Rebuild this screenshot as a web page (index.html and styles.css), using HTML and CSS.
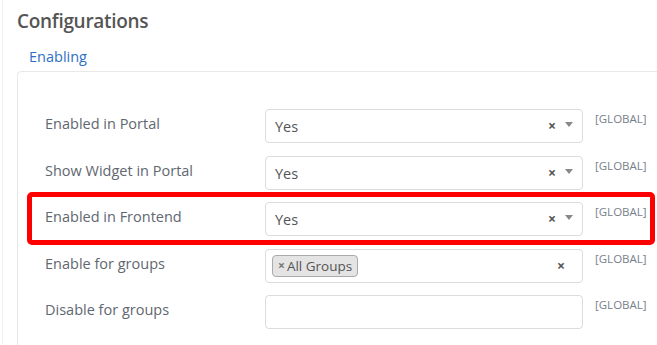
FILE: index.html
```html
<!DOCTYPE html>
<html>
<head>
<meta charset="utf-8">
<link rel="stylesheet" href="styles.css">
</head>
<body>
<div class="page">
  <h2 class="title">Configurations</h2>
  <div class="tabs"><span class="tab">Enabling</span></div>
  <div class="card">
    <div class="row">
      <label class="label">Enabled in Portal</label>
      <div class="select"><span class="value">Yes</span><span class="clear">×</span><span class="arrow"></span></div>
      <span class="scope">[GLOBAL]</span>
    </div>
    <div class="row">
      <label class="label">Show Widget in Portal</label>
      <div class="select"><span class="value">Yes</span><span class="clear">×</span><span class="arrow"></span></div>
      <span class="scope">[GLOBAL]</span>
    </div>
    <div class="row">
      <label class="label">Enabled in Frontend</label>
      <div class="select"><span class="value">Yes</span><span class="clear">×</span><span class="arrow"></span></div>
      <span class="scope">[GLOBAL]</span>
    </div>
    <div class="row">
      <label class="label">Enable for groups</label>
      <div class="select multi"><span class="tag"><span class="tag-x">×</span> All Groups</span><span class="clear">×</span></div>
      <span class="scope">[GLOBAL]</span>
    </div>
    <div class="row">
      <label class="label">Disable for groups</label>
      <div class="select multi"></div>
      <span class="scope">[GLOBAL]</span>
    </div>
  </div>
  <div class="highlight"></div>
</div>
</body>
</html>
```

FILE: styles.css
```css
html, body {
  margin: 0;
  padding: 0;
  background: #fff;
  overflow: hidden;
  height: 345px;
}
body {
  font-family: "Open Sans", "Liberation Sans", sans-serif;
  color: #555;
}
.page {
  position: relative;
  margin-left: 2px;
  border-left: 1px solid #f1f1f1;
  height: 345px;
  overflow: hidden;
  padding-left: 14px;
  padding-top: 8px;
  box-sizing: border-box;
}
.title {
  margin: 0;
  font-size: 19px;
  font-weight: 600;
  line-height: 26px;
  color: #555;
  letter-spacing: -0.3px;
}
.tabs {
  padding-left: 12px;
  margin-top: 11px;
  height: 26px;
}
.tab {
  font-size: 14.5px;
  line-height: 20px;
  color: #2f6fc6;
}
.card {
  margin-right: -30px;
  border: 1px solid #e8e8e8;
  border-radius: 4px;
  padding: 37px 0 40px 27px;
}
.row {
  display: grid;
  grid-template-columns: 208px 318px auto;
  column-gap: 12px;
  align-items: start;
  margin-bottom: 12.5px;
}
.label {
  font-size: 14.5px;
  line-height: 20px;
  padding-top: 5px;
  color: #5f6770;
}
.select {
  box-sizing: border-box;
  height: 34px;
  border: 1px solid #dcdcdc;
  border-radius: 4px;
  display: flex;
  align-items: center;
  padding: 0 9px 0 9px;
}
.value {
  flex: 1;
  font-size: 14.5px;
  color: #555;
  padding-top: 1px;
}
.clear {
  font-size: 14px;
  font-weight: 700;
  color: #555;
  line-height: 1;
  margin-right: 9px;
}
.arrow {
  width: 0;
  height: 0;
  border-left: 4px solid transparent;
  border-right: 4px solid transparent;
  border-top: 5px solid #888;
  margin-top: -3px;
}
.multi {
  padding: 0 0 0 6px;
}
.multi .clear {
  margin-left: auto;
  margin-right: 17px;
}
.tag {
  box-sizing: border-box;
  height: 22px;
  display: inline-flex;
  align-items: center;
  padding: 0 5px;
  background: #e4e4e4;
  border: 1px solid #aaa;
  border-radius: 4px;
  font-size: 13.5px;
  color: #555;
}
.tag-x {
  font-size: 12px;
  color: #777;
  font-weight: 700;
  margin-right: 2px;
}
.scope {
  font-size: 11.5px;
  line-height: 14px;
  padding-top: 3px;
  color: #76808b;
}
.highlight {
  position: absolute;
  left: 24px;
  top: 192px;
  width: 628px;
  height: 53px;
  box-sizing: border-box;
  border: 5px solid #ff0000;
  border-radius: 5px;
  pointer-events: none;
}
```
